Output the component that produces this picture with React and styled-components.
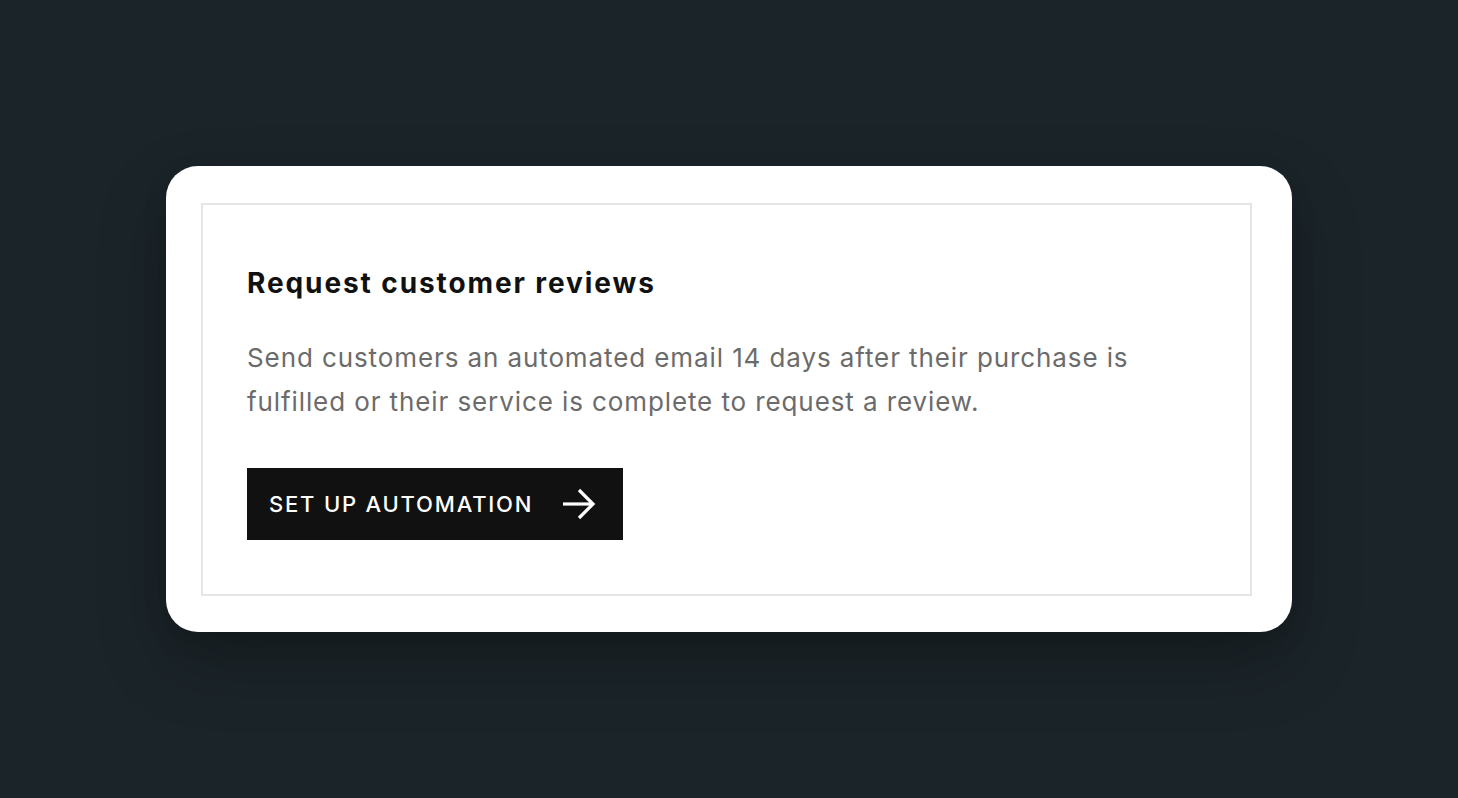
import React from "react";
import styled, { createGlobalStyle } from "styled-components";

const GlobalStyle = createGlobalStyle`
  html, body {
    margin: 0;
    padding: 0;
    background: #1b2429;
  }
  body {
    font-family: Inter, "Liberation Sans", sans-serif;
    -webkit-font-smoothing: antialiased;
  }
`;

const Page = styled.div`
  width: 1458px;
  height: 798px;
  display: flex;
  align-items: center;
  justify-content: center;
`;

const Card = styled.div`
  width: 1126px;
  height: 466px;
  box-sizing: border-box;
  background: #fff;
  border-radius: 32px;
  padding: 37px 40px 36px 35px;
  box-shadow: 0 30px 70px rgba(0, 0, 0, 0.22), 0 8px 24px rgba(0, 0, 0, 0.12);
  display: flex;
`;

const Panel = styled.div`
  flex: 1;
  border: 2px solid #e5e5e5;
  padding: 61px 44px 0;
  display: flex;
  flex-direction: column;
  align-items: flex-start;
`;

const Title = styled.h2`
  margin: 0;
  font-size: 28px;
  font-weight: 700;
  line-height: 34px;
  color: #111;
  letter-spacing: 1.9px;
`;

const Description = styled.p`
  margin: 36px 0 0;
  max-width: 900px;
  font-size: 26px;
  line-height: 44px;
  font-weight: 400;
  color: #6b6b6b;
  letter-spacing: 0.9px;
`;

const Button = styled.button`
  margin-top: 44px;
  height: 72px;
  padding: 0 27px 0 22px;
  display: flex;
  align-items: center;
  gap: 29px;
  background: #111;
  color: #fff;
  border: none;
  border-radius: 0;
  font-family: inherit;
  font-size: 22px;
  font-weight: 500;
  letter-spacing: 1.8px;
  cursor: pointer;
`;

const Arrow = () => (
  <svg width="34" height="32" viewBox="0 0 34 32" fill="none">
    <path d="M1 16 H31" stroke="#fff" strokeWidth="3.2" />
    <path d="M17 2 L31 16 L17 30" stroke="#fff" strokeWidth="3.2" strokeLinejoin="miter" />
  </svg>
);

export default function App() {
  return (
    <>
      <GlobalStyle />
      <Page>
        <Card>
          <Panel>
            <Title>Request customer reviews</Title>
            <Description>
              Send customers an automated email 14 days after their purchase is
              fulfilled or their service is complete to request a review.
            </Description>
            <Button>
              SET UP AUTOMATION
              <Arrow />
            </Button>
          </Panel>
        </Card>
      </Page>
    </>
  );
}
